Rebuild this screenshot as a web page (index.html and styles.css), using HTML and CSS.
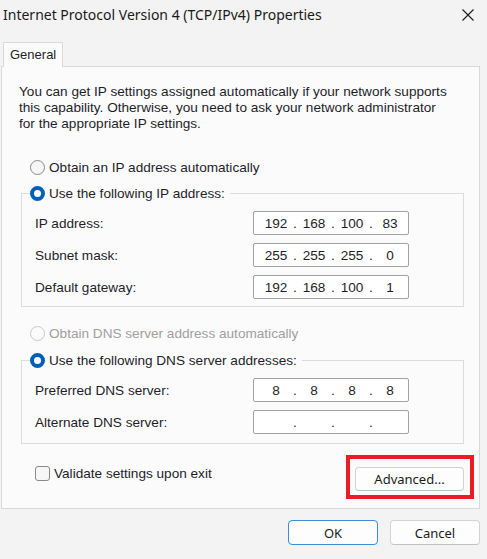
FILE: index.html
```html
<!DOCTYPE html>
<html lang="en">
<head>
    <meta charset="UTF-8">
    <meta name="viewport" content="width=device-width, initial-scale=1.0">
    <title>Internet Protocol Version 4 (TCP/IPv4) Properties</title>
    <link rel="stylesheet" href="styles.css">
</head>
<body>

    <div class="titlebar">
        <span class="title">Internet Protocol Version 4 (TCP/IPv4) Properties</span>
        <svg class="close" width="12" height="12" viewBox="0 0 12 12">
            <path d="M0.5 0.5 L11.5 11.5 M11.5 0.5 L0.5 11.5" stroke="#1a1a1a" stroke-width="1.1" fill="none"/>
        </svg>
    </div>

    <div class="tabs">
        <div class="tab">General</div>
    </div>

    <div class="panel">
        <p class="intro">You can get IP settings assigned automatically if your network supports this capability. Otherwise, you need to ask your network administrator for the appropriate IP settings.</p>

        <label class="option">
            <input type="radio" name="ip"> Obtain an IP address automatically
        </label>

        <fieldset class="group">
            <legend>
                <label class="option"><input type="radio" name="ip" checked> Use the following IP address:</label>
            </legend>
            <div class="rows">
                <span>IP address:</span>
                <div class="ipbox"><b>192</b><i>.</i><b>168</b><i>.</i><b>100</b><i>.</i><b>83</b></div>
                <span>Subnet mask:</span>
                <div class="ipbox"><b>255</b><i>.</i><b>255</b><i>.</i><b>255</b><i>.</i><b>0</b></div>
                <span>Default gateway:</span>
                <div class="ipbox"><b>192</b><i>.</i><b>168</b><i>.</i><b>100</b><i>.</i><b>1</b></div>
            </div>
        </fieldset>

        <label class="option disabled dns-auto">
            <input type="radio" name="dns" disabled> Obtain DNS server address automatically
        </label>

        <fieldset class="group">
            <legend>
                <label class="option"><input type="radio" name="dns" checked> Use the following DNS server addresses:</label>
            </legend>
            <div class="rows">
                <span>Preferred DNS server:</span>
                <div class="ipbox"><b>8</b><i>.</i><b>8</b><i>.</i><b>8</b><i>.</i><b>8</b></div>
                <span>Alternate DNS server:</span>
                <div class="ipbox"><b></b><i>.</i><b></b><i>.</i><b></b><i>.</i><b></b></div>
            </div>
        </fieldset>

        <div class="bottom">
            <label class="option check">
                <input type="checkbox"> Validate settings upon exit
            </label>
            <div class="highlight">
                <button class="btn advanced">Advanced...</button>
                <span class="redbox"></span>
            </div>
        </div>
    </div>

    <div class="footer">
        <button class="btn default">OK</button>
        <button class="btn">Cancel</button>
    </div>

</body>
</html>
```

FILE: styles.css
```css
body {
    margin: 0;
    background-color: #f3f3f3;
    font-family: "Liberation Sans", Arial, sans-serif;
    font-size: 13.6px;
    color: #1e1e2a;
}
.titlebar {
    height: 28px;
    display: flex;
    align-items: center;
    justify-content: space-between;
    padding: 0 13px 0 3px;
}
.title {
    font-family: "Noto Sans", sans-serif;
    font-size: 14px;
    color: #1a1a1a;
}
.close {
    margin-top: 1px;
}
.tabs {
    display: flex;
    padding-left: 3px;
    margin-top: 14px;
}
.tab {
    height: 24px;
    line-height: 24px;
    padding: 0 6px;
    font-size: 13px;
    background: #fbfbfb;
    border: 1px solid #d9d9d9;
    border-bottom: none;
    margin-bottom: -1px;
    position: relative;
}
.panel {
    margin-left: 1px;
    width: 479px;
    background: #fbfbfb;
    border: 1px solid #d9d9d9;
    padding: 17px 0 17px 17px;
    box-sizing: border-box;
}
.intro {
    margin: 0;
    line-height: 16px;
    width: 430px;
}
.option {
    display: flex;
    align-items: center;
    height: 16px;
    gap: 4px;
    white-space: nowrap;
}
.panel > .option {
    margin: 27px 0 0 11px;
}
.panel > .dns-auto {
    margin-top: 18px;
}
.option input {
    appearance: none;
    margin: 0;
    width: 15px;
    height: 15px;
    border: 1px solid #8a8a8a;
    border-radius: 50%;
    background: #f6f6f6;
    box-sizing: border-box;
}
.option input:checked {
    background: #fff;
    border: 4.5px solid #005fb8;
}
.option input:disabled {
    border-color: #c8c8c8;
    background: #fbfbfb;
}
.disabled {
    color: #a0a0a0;
}
.group {
    margin: 10px 15px 0 2px;
    padding: 0 0 7px 8px;
    border: 1px solid #dcdcdc;
    min-width: 0;
}
.group legend {
    padding: 0 5px 0 0;
}
.dns-auto + .group {
    margin-top: 11px;
}
.dns-auto + .group .rows {
    padding-bottom: 2px;
}
.rows {
    display: grid;
    grid-template-columns: 218px 156px;
    row-gap: 8px;
    align-items: center;
    margin-top: 10px;
    padding-left: 5px;
}
.ipbox {
    height: 24px;
    box-sizing: border-box;
    border: 1px solid #a2a2a2;
    border-radius: 2px;
    background: #fff;
    display: flex;
    align-items: center;
    padding-left: 7px;
}
.ipbox b {
    font-weight: normal;
    width: 30px;
    text-align: center;
}
.ipbox i {
    font-style: normal;
    width: 8px;
    text-align: center;
}
.bottom {
    display: flex;
    justify-content: space-between;
    align-items: flex-start;
    margin-top: 21px;
    padding-right: 15px;
}
.check {
    margin-left: 16px;
}
.check input {
    border-radius: 3px;
}
.highlight {
    position: relative;
    margin-top: 2px;
}
.redbox {
    position: absolute;
    left: -9px;
    top: -12px;
    right: -10px;
    bottom: -8px;
    border: 4px solid #ed1c24;
}
.btn {
    font-family: "Noto Sans", sans-serif;
    font-size: 13px;
    color: #1a1a1a;
    background: #fdfdfd;
    border: 1px solid #d3d3d3;
    border-bottom-color: #c2c2c2;
    border-radius: 4px;
    height: 25px;
    padding: 0;
}
.advanced {
    width: 109px;
    height: 24px;
    display: block;
}
.footer {
    display: flex;
    justify-content: flex-end;
    gap: 12px;
    padding: 11px 7px 0 0;
}
.footer .btn {
    width: 90px;
}
.btn.default {
    border: 1px solid #3f8ad9;
}
```
